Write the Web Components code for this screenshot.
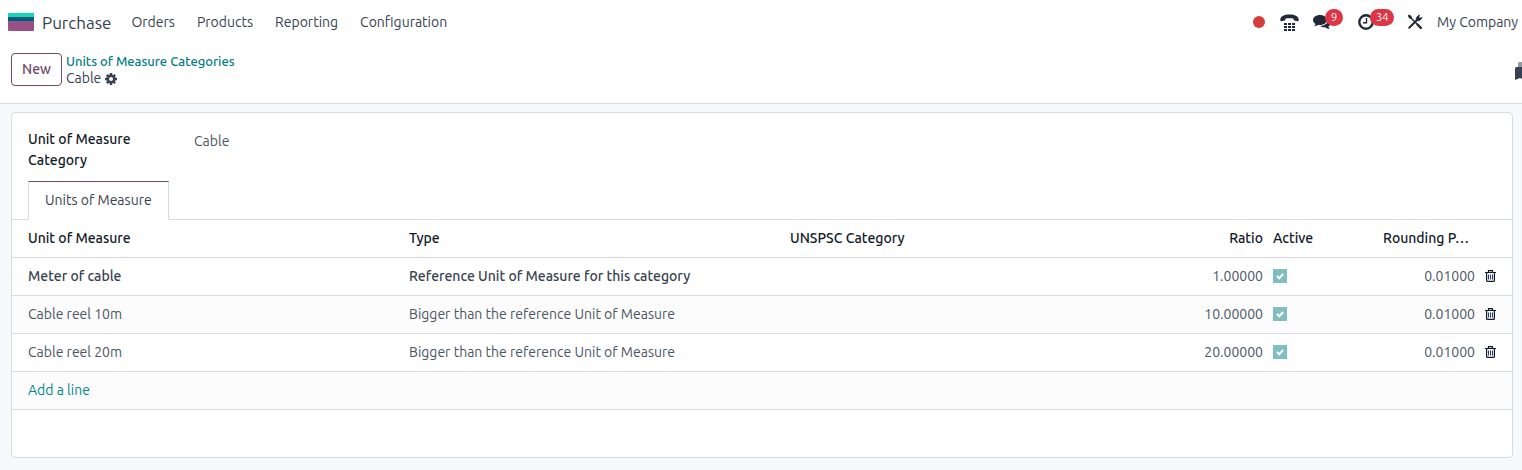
<!DOCTYPE html>
<html lang="en">
<head>
<meta charset="utf-8">
<title>Units of Measure Categories - Cable</title>
<style>
  body {
    margin: 0;
    min-height: 100vh;
    background: #f8f9fb;
    color: #374151;
    font: 14px/21px "Ubuntu", "Noto Sans", sans-serif;
  }
</style>
</head>
<body>
<nav-bar app="Purchase" company="My Company">
  <menu-item>Orders</menu-item>
  <menu-item>Products</menu-item>
  <menu-item>Reporting</menu-item>
  <menu-item>Configuration</menu-item>
</nav-bar>
<control-panel parent="Units of Measure Categories">Cable</control-panel>
<form-sheet>
  <form-field slot="fields" label="Unit of Measure Category" value="Cable"></form-field>
  <tab-header slot="tabs">Units of Measure</tab-header>
  <uom-list></uom-list>
</form-sheet>

<script>
function attach(el, html) {
  const template = document.createElement("template");
  template.innerHTML = html;
  el.attachShadow({ mode: "open" });
  el.shadowRoot.appendChild(template.content.cloneNode(true));
}

class MenuItem extends HTMLElement {
  constructor() {
    super();
    attach(this, `
      <style>
        :host { display: block; }
        a { color: #374151; text-decoration: none; }
      </style>
      <a href="#"><slot></slot></a>
    `);
  }
}

class CountBadge extends HTMLElement {
  constructor() {
    super();
    attach(this, `
      <style>
        :host {
          position: absolute;
          left: 12px;
          top: -5px;
          padding: 0 6px;
          border-radius: 9px;
          background: #dc3545;
          color: #fff;
          font-size: 11px;
          line-height: 17px;
        }
      </style>
      <slot></slot>
    `);
  }
}

class NavBar extends HTMLElement {
  constructor() {
    super();
    attach(this, `
      <style>
        :host {
          display: flex;
          align-items: center;
          height: 46px;
          padding: 0 4px 2px 8px;
          box-sizing: border-box;
          background: #fff;
        }
        .logo { width: 26px; height: 18px; margin-right: 8px; }
        .app { color: #374151; font-size: 17px; text-decoration: none; }
        .menu { display: flex; gap: 22px; margin-left: 20px; }
        .tray { display: flex; align-items: center; margin-left: auto; }
        button {
          position: relative;
          display: flex;
          padding: 0;
          border: 0;
          background: none;
          color: #1f2937;
          font: inherit;
        }
        svg { display: block; }
        .rec { margin-right: 15px; }
        .phone { margin-right: 14px; }
        .chat { margin-right: 27px; }
        .clock { margin-right: 33px; }
        .tools { margin-right: 14px; }
        .company { color: #374151; }
      </style>
      <svg class="logo" viewBox="0 0 26 18">
        <rect width="26" height="18" rx="1" fill="#985184"/>
        <path d="M0 4h26v4H0z" fill="#005e7a"/>
        <path d="M0 4V1q0-1 1-1h24q1 0 1 1v3z" fill="#1ad3bb"/>
      </svg>
      <a class="app" href="#"></a>
      <div class="menu"><slot></slot></div>
      <div class="tray">
        <button class="rec" aria-label="Status">
          <svg width="12" height="12"><circle cx="6" cy="6" r="6" fill="#d23f3a"/></svg>
        </button>
        <button class="phone" aria-label="Phone">
          <svg width="19" height="17" viewBox="0 0 19 17" fill="currentColor">
            <path d="M.3 5.400C.4 2.600 4 .5 9.500 .5s9.100 2.100 9.200 4.900v1q0 .8-.8.8l-3.600-.6q-.7-.1-.7-.8V4.600C12 4 7 4 5.400 4.600v1.200q0 .7-.7.8l-3.600.6q-.8 0-.8-.8z"/>
            <path d="M4 9h3v2H4zM8 9h3v2H8zM12 9h3v2h-3zM4 12h3v2H4zM8 12h3v2H8zM12 12h3v2h-3zM4 15h3v2H4zM8 15h3v2H8zM12 15h3v2h-3z"/>
          </svg>
        </button>
        <button class="chat" aria-label="Messages">
          <svg width="18" height="16" viewBox="0 0 18 16" fill="currentColor">
            <path d="M7 1C3.100 1 0 3.200 0 6c0 1.600 1 3 2.600 3.900-.3 1-.9 1.600-1.500 2.300 1.800-.1 3.200-.7 4.200-1.400.6.100 1.100.2 1.700.2 3.900 0 7-2.200 7-5S10.900 1 7 1z"/>
            <path d="M15.200 5.300c.2 3.900-3.500 6.600-8.100 6.700 1.300 1 3.300 1.500 5.200 1.200 1.200 1 2.700 1.600 4.500 1.700-.7-.7-1.200-1.300-1.500-2.300C16.900 11.700 18 10.400 18 9c0-1.500-1-2.900-2.800-3.700z"/>
          </svg>
          <count-badge>9</count-badge>
        </button>
        <button class="clock" aria-label="Activities">
          <svg width="16" height="16" viewBox="0 0 16 16" fill="none" stroke="currentColor">
            <circle cx="8" cy="8" r="6.700" stroke-width="2.400"/>
            <path d="M8.500 4v4.800H5" stroke-width="1.400"/>
          </svg>
          <count-badge>34</count-badge>
        </button>
        <button class="tools" aria-label="Tools">
          <svg width="16" height="16" viewBox="0 0 16 16" fill="none" stroke="currentColor">
            <path d="M2.200 13.800 10 6" stroke-width="2" stroke-linecap="round"/>
            <path d="M12.300.9 10 3.100a2.400 2.400 0 0 0-.5 2.500l.9.900a2.400 2.400 0 0 0 2.500-.5l2.200-2.300-2.200.6-1.200-1.200z" fill="currentColor"/>
            <path d="M2.500 2.500 10 10" stroke-width="1.400"/>
            <path d="m.8 1.800 1.300-1.300 2.500 1.700.2 1.600-1 1-1.600-.3z" fill="currentColor" stroke="none"/>
            <path d="m10.500 10.500 3.300 3.300" stroke-width="2.400" stroke-linecap="round"/>
          </svg>
        </button>
        <span class="company"></span>
      </div>
    `);
    this.shadowRoot.querySelector(".app").textContent = this.getAttribute("app");
    this.shadowRoot.querySelector(".company").textContent = this.getAttribute("company");
  }
}

class ControlPanel extends HTMLElement {
  constructor() {
    super();
    attach(this, `
      <style>
        :host {
          display: flex;
          align-items: flex-start;
          height: 58px;
          padding: 7px 0 0 11px;
          box-sizing: border-box;
          border-bottom: 1px solid #d8dadd;
          background: #fff;
        }
        .new {
          padding: 5px 10px;
          border: 1px solid #714b67;
          border-radius: 4px;
          background: #fff;
          color: #714b67;
          font: inherit;
          font-weight: 500;
        }
        .trail { margin-left: 4px; line-height: 17px; }
        .trail a { color: #017e84; font-size: 13px; font-weight: 500; text-decoration: none; }
        .current { display: flex; align-items: center; gap: 4px; }
        .gear, .mark { display: flex; padding: 0; border: 0; background: none; color: #374151; }
        .mark { margin: 9px 0 0 auto; }
      </style>
      <button class="new">New</button>
      <div class="trail">
        <a href="#"></a>
        <div class="current">
          <slot></slot>
          <button class="gear" aria-label="Actions">
            <svg width="12" height="12" viewBox="0 0 12 12" fill="none" stroke="currentColor">
              <circle cx="6" cy="6" r="3.300" stroke-width="2.600"/>
              <path d="M6 0v2M6 10v2M0 6h2M10 6h2M1.800 1.800l1.400 1.400M8.800 8.800l1.400 1.400M10.200 1.800 8.800 3.200M3.200 8.800l-1.400 1.400" stroke-width="2.400"/>
            </svg>
          </button>
        </div>
      </div>
      <button class="mark" aria-label="Knowledge">
        <svg width="7" height="18" viewBox="0 0 7 18">
          <path d="M3 5V1.500Q3 0 4.500 0H7v5z" fill="#9499a2"/>
          <path d="M0 18V6.500Q0 5 1.500 5H7v12l-2-1z" fill="currentColor"/>
        </svg>
      </button>
    `);
    this.shadowRoot.querySelector(".trail a").textContent = this.getAttribute("parent");
  }
}

class FormSheet extends HTMLElement {
  constructor() {
    super();
    attach(this, `
      <style>
        :host {
          display: block;
          margin: 8px 9px 0 11px;
          padding: 16px 0 47px;
          border: 1px solid #d8dadd;
          border-radius: 4px;
          background: #fff;
        }
        .fields { padding: 0 16px; }
        .tabs {
          display: flex;
          margin-top: 10px;
          padding: 0 16px;
          border-bottom: 1px solid #d8dadd;
        }
      </style>
      <div class="fields"><slot name="fields"></slot></div>
      <div class="tabs"><slot name="tabs"></slot></div>
      <slot></slot>
    `);
  }
}

class FormField extends HTMLElement {
  constructor() {
    super();
    attach(this, `
      <style>
        :host { display: flex; align-items: flex-start; }
        label { width: 150px; padding-right: 16px; box-sizing: border-box; color: #111827; font-weight: 500; }
        input {
          flex: 1;
          height: 22px;
          margin-left: 16px;
          padding: 1px 0 0;
          border: 0;
          outline: 0;
          background: none;
          color: #4b5563;
          font: inherit;
        }
      </style>
      <label for="value"></label>
      <input id="value">
    `);
    this.shadowRoot.querySelector("label").textContent = this.getAttribute("label");
    this.shadowRoot.querySelector("input").value = this.getAttribute("value");
  }
}

class TabHeader extends HTMLElement {
  constructor() {
    super();
    attach(this, `
      <style>
        :host { display: block; margin-bottom: -1px; }
        button {
          display: block;
          padding: 8px 16px;
          border: 1px solid #d8dadd;
          border-top-color: #714b67;
          border-bottom-color: #fff;
          background: #fff;
          color: #374151;
          font: inherit;
        }
      </style>
      <button role="tab" aria-selected="true"><slot></slot></button>
    `);
  }
}

const lines = [
  { name: "Meter of cable", type: "Reference Unit of Measure for this category", ratio: "1.00000", rounding: "0.01000", reference: true },
  { name: "Cable reel 10m", type: "Bigger than the reference Unit of Measure", ratio: "10.00000", rounding: "0.01000" },
  { name: "Cable reel 20m", type: "Bigger than the reference Unit of Measure", ratio: "20.00000", rounding: "0.01000" },
];

class UomList extends HTMLElement {
  constructor() {
    super();
    const rows = lines.map((line) => `
      <tr class="${line.reference ? "reference" : ""}">
        <td>${line.name}</td>
        <td>${line.type}</td>
        <td></td>
        <td class="num">${line.ratio}</td>
        <td class="active"><input type="checkbox" checked disabled aria-label="Active"></td>
        <td class="num">${line.rounding}</td>
        <td class="del">
          <button aria-label="Delete">
            <svg width="11" height="12" viewBox="0 0 11 12" fill="none" stroke="#111827">
              <path d="M0 2.500h11M3.500 2V.6h4V2M1.600 3v7.500q0 .9.900.9h6q.9 0 .9-.9V3" stroke-width="1.200"/>
              <path d="M3.500 4.500v5M5.500 4.500v5M7.500 4.500v5" stroke="#1f3a7a"/>
            </svg>
          </button>
        </td>
      </tr>
    `).join("");
    attach(this, `
      <style>
        :host { display: block; }
        table { width: 100%; table-layout: fixed; border-collapse: separate; border-spacing: 0; }
        th, td {
          height: 37px;
          padding: 0 5px;
          border-bottom: 1px solid #d8dadd;
          color: #4b5563;
          text-align: left;
          white-space: nowrap;
        }
        th { color: #111827; font-weight: 500; }
        th:first-child, td:first-child { padding-left: 16px; }
        tbody tr:nth-child(even) { background: #fcfcfc; }
        .reference td:nth-child(-n+2) { color: #374151; font-weight: 500; }
        th.num, td.num { text-align: right; }
        td.active, td.del { padding-bottom: 1px; height: 36px; }
        th.rounding { padding-right: 11px; }
        a { color: #01858b; text-decoration: none; }
        button { display: block; padding: 0; border: 0; background: none; }
        svg { display: block; }
        input {
          display: block;
          appearance: none;
          width: 14px;
          height: 14px;
          margin: 0;
          background: #80bec1 url("data:image/svg+xml,%3Csvg xmlns='http://www.w3.org/2000/svg' viewBox='0 0 14 14'%3E%3Cpath d='M4 7l2.200 2.200L10.200 5' fill='none' stroke='white' stroke-width='2'/%3E%3C/svg%3E");
        }
      </style>
      <table>
        <colgroup>
          <col style="width: 392px"><col style="width: 381px"><col style="width: 381px">
          <col style="width: 102px"><col style="width: 102px"><col style="width: 110px"><col style="width: 32px">
        </colgroup>
        <thead>
          <tr>
            <th>Unit of Measure</th>
            <th>Type</th>
            <th>UNSPSC Category</th>
            <th class="num">Ratio</th>
            <th>Active</th>
            <th class="num rounding">Rounding P…</th>
            <th></th>
          </tr>
        </thead>
        <tbody>
          ${rows}
          <tr><td colspan="7"><a href="#">Add a line</a></td></tr>
        </tbody>
      </table>
    `);
  }
}

customElements.define("menu-item", MenuItem);
customElements.define("count-badge", CountBadge);
customElements.define("nav-bar", NavBar);
customElements.define("control-panel", ControlPanel);
customElements.define("form-sheet", FormSheet);
customElements.define("form-field", FormField);
customElements.define("tab-header", TabHeader);
customElements.define("uom-list", UomList);
</script>
</body>
</html>
